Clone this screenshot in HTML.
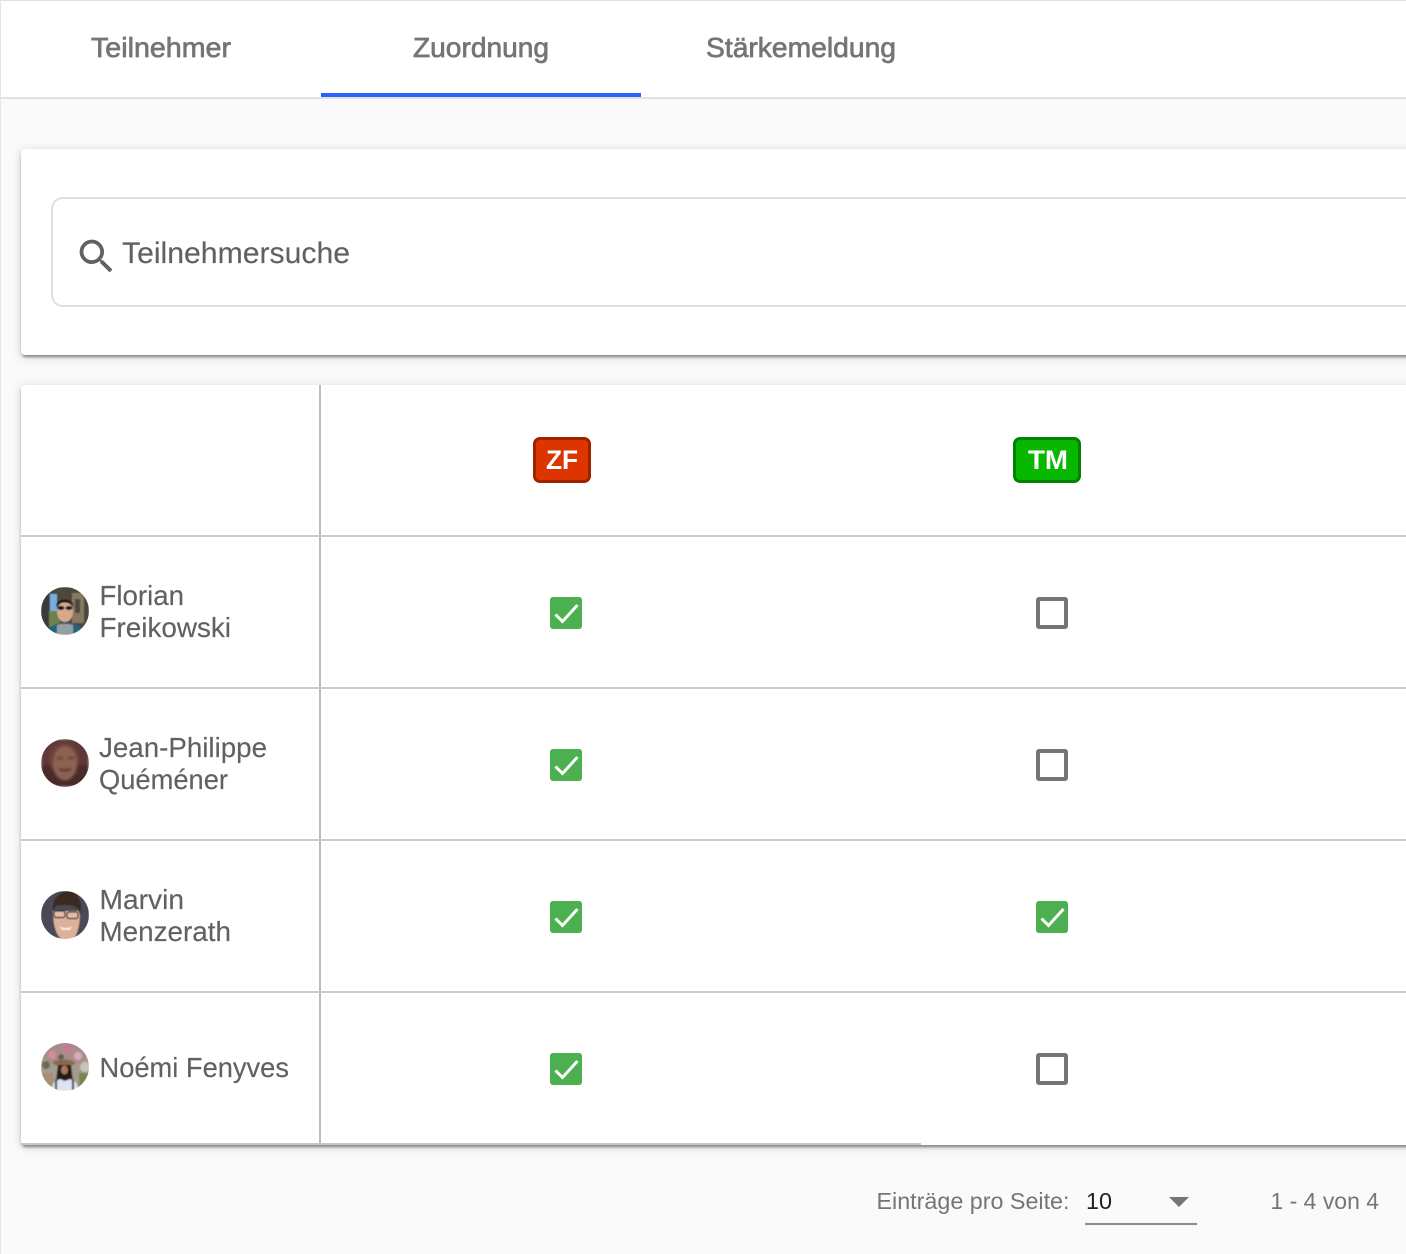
<!DOCTYPE html>
<html lang="de"><head><meta charset="utf-8"><title>Zuordnung</title>
<style>
html,body{margin:0;padding:0;width:1406px;height:1254px;overflow:hidden;background:#fafafa}
body{position:relative;font-family:"Liberation Sans",sans-serif}
.a{position:absolute;box-sizing:border-box}
.card{background:#fff;border-radius:4px 0 0 4px;box-shadow:0 4px 2px -2px rgba(0,0,0,.28),0 2px 3px 0 rgba(0,0,0,.18),0 2px 10px 0 rgba(0,0,0,.16)}
.h{left:21px;width:1385px;height:2px;background:#ccc}
.on,.off{width:32px;height:32px;border-radius:3px}
.on{background:#4caf50}
.off{border:4px solid #757575;background:#fff}
.on svg{display:block}
.av{left:41px;width:48px;height:48px;border-radius:50%;overflow:hidden}
.av svg{display:block}
svg.t{position:absolute;left:0;top:0}
svg.t text{font-family:"Liberation Sans",sans-serif}
</style></head><body>
<div class="a" style="left:0;top:0;width:1406px;height:97px;background:#fff"></div>
<div class="a" style="left:0;top:0;width:1406px;height:1px;background:#e0e0e0"></div>
<div class="a" style="left:0;top:0;width:1px;height:1254px;background:#e4e4e4"></div>
<div class="a" style="left:0;top:97px;width:1406px;height:2px;background:#e2e2e2"></div>
<div class="a" style="left:321px;top:93px;width:320px;height:4px;background:#2962ff"></div>

<div class="a card" style="left:21px;top:149px;width:1400px;height:206px"></div>
<div class="a" style="left:51px;top:197px;width:1400px;height:110px;border:2px solid #e0e0e0;border-radius:12px;background:#fff"></div>
<svg class="a" style="left:73.6px;top:234.4px" width="45" height="45" viewBox="0 0 24 24"><path fill="#616161" d="M15.5 14h-.79l-.28-.27A6.471 6.471 0 0 0 16 9.5 6.5 6.5 0 1 0 9.5 16c1.61 0 3.09-.59 4.23-1.57l.27.28v.79l5 4.99L20.49 19l-4.99-5zm-6 0C7.01 14 5 11.99 5 9.5S7.01 5 9.5 5 14 7.01 14 9.5 11.99 14 9.5 14z"/></svg>

<div class="a card" style="left:21px;top:385px;width:1400px;height:760px"></div>
<div class="a" style="left:319px;top:385px;width:2px;height:758px;background:#bdbdbd"></div>
<div class="a h" style="top:535px"></div>
<div class="a h" style="top:687px"></div>
<div class="a h" style="top:839px"></div>
<div class="a h" style="top:991px"></div>
<div class="a" style="left:21px;top:1143px;width:900px;height:2px;background:#c8c8c8"></div>

<div class="a" style="left:533px;top:437px;width:58px;height:46px;background:#dd3500;border:3.5px solid #9c2400;border-radius:7px"></div>
<div class="a" style="left:1013px;top:437px;width:68px;height:46px;background:#08b800;border:3.5px solid #048204;border-radius:7px"></div>

<div class="a on" style="left:550px;top:597px"><svg width="32" height="32"><path d="M5.5 17.5l7 7L27.5 8" fill="none" stroke="#fff" stroke-width="3"/></svg></div>
<div class="a off" style="left:1036px;top:597px"></div>
<div class="a on" style="left:550px;top:749px"><svg width="32" height="32"><path d="M5.5 17.5l7 7L27.5 8" fill="none" stroke="#fff" stroke-width="3"/></svg></div>
<div class="a off" style="left:1036px;top:749px"></div>
<div class="a on" style="left:550px;top:901px"><svg width="32" height="32"><path d="M5.5 17.5l7 7L27.5 8" fill="none" stroke="#fff" stroke-width="3"/></svg></div>
<div class="a on" style="left:1036px;top:901px"><svg width="32" height="32"><path d="M5.5 17.5l7 7L27.5 8" fill="none" stroke="#fff" stroke-width="3"/></svg></div>
<div class="a on" style="left:550px;top:1053px"><svg width="32" height="32"><path d="M5.5 17.5l7 7L27.5 8" fill="none" stroke="#fff" stroke-width="3"/></svg></div>
<div class="a off" style="left:1036px;top:1053px"></div>

<div class="a av" style="top:587px"><svg width="48" height="48" viewBox="0 0 48 48">
<defs><filter id="b1"><feGaussianBlur stdDeviation=".6"/></filter></defs>
<g filter="url(#b1)"><rect width="48" height="48" fill="#4d463c"/>
<rect x="0" y="0" width="8" height="48" fill="#3a3a38"/>
<rect x="9" y="7" width="7" height="20" fill="#74aee0"/>
<rect x="8" y="24" width="11" height="16" fill="#6f8048"/>
<rect x="31" y="6" width="12" height="30" fill="#86795f"/>
<rect x="34" y="12" width="5" height="14" fill="#4f473a"/>
<ellipse cx="24" cy="25" rx="8" ry="10" fill="#d6a88e"/>
<path d="M15 20C14 10 33 10 33 20L31 17C26 15 20 15 17 17z" fill="#1f1a18"/>
<ellipse cx="20" cy="21" rx="3.400" ry="2" fill="#201c1c"/><ellipse cx="28" cy="21" rx="3.400" ry="2" fill="#201c1c"/>
<path d="M6 48L9 40 18 36H30L40 40 44 48z" fill="#24657e"/>
<path d="M16 48V38L20 37H28L32 38V48z" fill="#96a0a4"/></g></svg></div>

<div class="a av" style="top:739px"><svg width="48" height="48" viewBox="0 0 48 48">
<defs><filter id="b2"><feGaussianBlur stdDeviation="1.200"/></filter></defs>
<g filter="url(#b2)"><rect width="48" height="48" fill="#5e3838"/>
<rect y="26" width="48" height="22" fill="#4c2b2b"/>
<ellipse cx="23" cy="20" rx="15" ry="16" fill="#6f4339"/>
<ellipse cx="24" cy="24" rx="12" ry="17" fill="#8c6252"/>
<path d="M16 19h6M27 19h6" stroke="#543430" stroke-width="2"/>
<path d="M18 30q6 3 12 0" stroke="#4a2222" stroke-width="2" fill="none"/></g></svg></div>

<div class="a av" style="top:891px"><svg width="48" height="48" viewBox="0 0 48 48">
<defs><filter id="b3"><feGaussianBlur stdDeviation=".6"/></filter></defs>
<g filter="url(#b3)"><rect width="48" height="48" fill="#494959"/>
<path d="M12 20C12 40 18 50 26 50 36 50 39 36 39 20z" fill="#ddb098"/>
<path d="M12 20C10 6 22 -1 29 0 38 2 42 12 39 24L37 18C32 12 22 15 16 14z" fill="#3a2c24"/>
<rect x="13" y="20" width="11" height="6.500" rx="2" fill="#e2bda8" stroke="#2e2e2e" stroke-width="1.200"/>
<rect x="26" y="21" width="11" height="6.500" rx="2" fill="#e2bda8" stroke="#2e2e2e" stroke-width="1.200"/>
<path d="M18 35q7 4 13 0l-2 4h-8z" fill="#f4ece6"/></g></svg></div>

<div class="a av" style="top:1043px"><svg width="48" height="48" viewBox="0 0 48 48">
<defs><filter id="b4"><feGaussianBlur stdDeviation=".7"/></filter></defs>
<g filter="url(#b4)"><rect width="48" height="48" fill="#a49c8e"/>
<ellipse cx="24" cy="10" rx="24" ry="12" fill="#a88d8c"/>
<circle cx="11" cy="12" r="4" fill="#d68ba0"/><circle cx="26" cy="6" r="4" fill="#c9788f"/><circle cx="37" cy="13" r="4" fill="#dcaab6"/><circle cx="20" cy="14" r="3" fill="#66604f"/>
<circle cx="5" cy="22" r="4" fill="#6c6b55"/><circle cx="44" cy="24" r="5" fill="#c9c6b7"/>
<rect y="30" width="12" height="18" fill="#a58f76"/><rect x="38" y="30" width="10" height="18" fill="#76864f"/>
<ellipse cx="23" cy="20" rx="11" ry="3.500" fill="#8a6b4f"/>
<path d="M17 22h13l2 16H15z" fill="#241b18"/>
<ellipse cx="23.500" cy="27" rx="3.500" ry="4.500" fill="#a8775d"/>
<path d="M9 48L13 39 19 36 24 38 29 36 35 39 38 48z" fill="#dfe2f0"/>
<path d="M15 37v11M32 37v11" stroke="#222" stroke-width="2"/></g></svg></div>

<svg class="t" width="1406" height="1254">
<g fill="#757575" font-size="27.500" stroke="#757575" stroke-width=".7">
<text x="91" y="57" textLength="140" lengthAdjust="spacingAndGlyphs">Teilnehmer</text>
<text x="413" y="57" textLength="136" lengthAdjust="spacingAndGlyphs">Zuordnung</text>
<text x="706" y="57" textLength="190" lengthAdjust="spacingAndGlyphs">Stärkemeldung</text>
</g>
<text x="122" y="263" font-size="29.500" fill="#616161" stroke="#616161" stroke-width=".15" textLength="228" lengthAdjust="spacingAndGlyphs">Teilnehmersuche</text>
<g fill="#616161" font-size="27.500" stroke="#616161" stroke-width=".15">
<text x="99.500" y="605" textLength="84.500" lengthAdjust="spacingAndGlyphs">Florian</text>
<text x="99.500" y="637" textLength="131.500" lengthAdjust="spacingAndGlyphs">Freikowski</text>
<text x="99" y="757" textLength="168" lengthAdjust="spacingAndGlyphs">Jean-Philippe</text>
<text x="99" y="789" textLength="129" lengthAdjust="spacingAndGlyphs">Quéméner</text>
<text x="99.500" y="909" textLength="84.500" lengthAdjust="spacingAndGlyphs">Marvin</text>
<text x="99.500" y="941" textLength="131.500" lengthAdjust="spacingAndGlyphs">Menzerath</text>
<text x="99.500" y="1077" textLength="189.500" lengthAdjust="spacingAndGlyphs">Noémi Fenyves</text>
</g>
<g fill="#fff" font-size="27" font-weight="700">
<text x="546" y="469" textLength="32" lengthAdjust="spacingAndGlyphs">ZF</text>
<text x="1028" y="469" textLength="40" lengthAdjust="spacingAndGlyphs">TM</text>
</g>
<g font-size="23.500" fill="#757575">
<text x="876.500" y="1209" textLength="193" lengthAdjust="spacingAndGlyphs">Einträge pro Seite:</text>
<text x="1086" y="1209" fill="#212121" textLength="26" lengthAdjust="spacingAndGlyphs">10</text>
<text x="1270.500" y="1209" textLength="108.500" lengthAdjust="spacingAndGlyphs">1 - 4 von 4</text>
</g>
<path d="M1169 1197h20l-10 10z" fill="#757575"/>
</svg>
<div class="a" style="left:1085px;top:1223px;width:112px;height:2px;background:#8c8c8c"></div>
</body></html>
